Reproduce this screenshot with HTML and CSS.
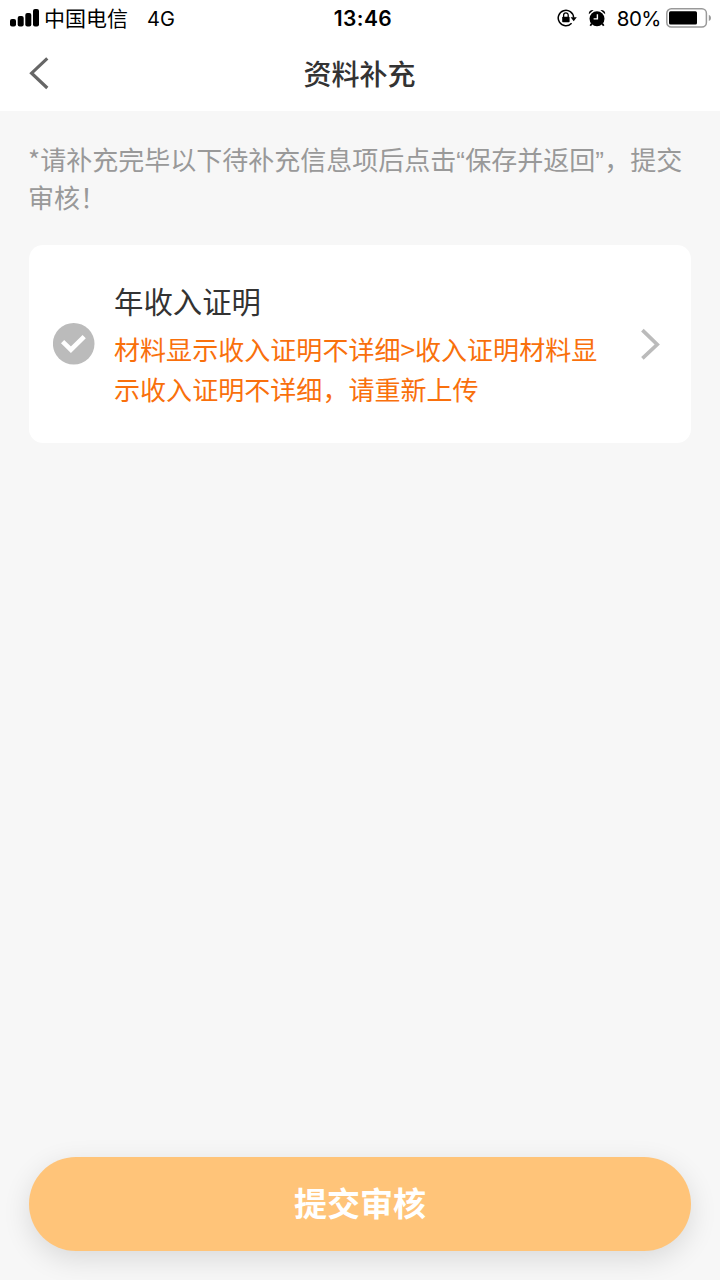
FILE: index.html
```html
<!DOCTYPE html>
<html lang="zh-CN">
<head>
<meta charset="utf-8">
<title>资料补充</title>
<link rel="stylesheet" href="styles.css">
</head>
<body>
<div class="screen">
  <div class="status">
    <div class="status-left">
      <svg class="signal" width="29" height="18" viewBox="0 0 29 18"><rect x="0" y="10" width="6" height="7.5" rx="2"/><rect x="7.7" y="7" width="6" height="10.5" rx="2"/><rect x="15.3" y="4" width="6" height="13.5" rx="2"/><rect x="23" y="0" width="6" height="17.5" rx="2"/></svg>
      <span class="carrier">中国电信</span>
      <span class="network">4G</span>
    </div>
    <span class="time">13:46</span>
    <div class="status-right">
      <svg class="lock" width="20" height="18" viewBox="0 0 20 18"><path d="M14.6 14.2A7.7 7.7 0 1 1 16.6 8.6" fill="none" stroke="#000" stroke-width="1.5"/><path d="M13.6 8.2h6.2l-3.1 4z"/><rect x="5.2" y="7.8" width="7.4" height="5.4" rx=".8"/><path d="M6.6 8V6.2a2.3 2.3 0 0 1 4.6 0V8" fill="none" stroke="#000" stroke-width="1.3"/></svg>
      <svg class="alarm" width="18" height="18" viewBox="0 0 18 18"><circle cx="9" cy="9.7" r="7.5"/><path d="M.8 5.2C.5 2.2 2.6.7 5.6.9L.8 5.2M17.2 5.2c.3-3-1.8-4.5-4.8-4.3l4.8 4.3"/><path d="M3.8 14.5 2.3 16.7M14.2 14.5l1.5 2.2" stroke="#000" stroke-width="1.8"/><path d="M9.4 5.2v4.7H5.6" fill="none" stroke="#fff" stroke-width="1.4"/></svg>
      <span class="percent">80%</span>
      <svg class="battery" width="46" height="20" viewBox="0 0 46 20"><rect x=".8" y=".8" width="39.6" height="18.2" rx="4.5" fill="none" stroke="#999" stroke-width="1.5"/><rect x="3" y="3.2" width="28" height="13.3" rx="1.5"/><path d="M42.8 6.7q2.2 1 2.2 3.2t-2.2 3.2z" fill="#999"/></svg>
    </div>
  </div>
  <header class="nav">
    <svg class="back" width="20" height="34" viewBox="0 0 20 34"><path d="M18.3 1.4 2.6 16.2l15.7 14.8" fill="none" stroke="#666" stroke-width="3.2"/></svg>
    <h1 class="title">资料补充</h1>
  </header>
  <main class="content">
    <p class="notice">*请补充完毕以下待补充信息项后点击<span class="quote">“</span>保存并返回<span class="quote">”</span>，提交<br>审核！</p>
    <section class="card">
      <svg class="check" width="42" height="42" viewBox="0 0 42 42"><circle cx="20.7" cy="20.8" r="20.8" fill="#bbb"/><path d="M9.6 18.6l8.3 8.1L31.2 13.6" fill="none" stroke="#fff" stroke-width="4.6"/></svg>
      <div class="card-body">
        <h2 class="name">年收入证明</h2>
        <p class="reason">材料显示收入证明不详细&gt;收入证明材料显<br>示收入证明不详细，请重新上传</p>
      </div>
      <svg class="chevron" width="20" height="32" viewBox="0 0 20 32"><path d="M2.4 2.2 17.2 16.5 2.4 30.4" fill="none" stroke="#bbb" stroke-width="3.7"/></svg>
    </section>
  </main>
  <footer class="footer"><button class="submit">提交审核</button></footer>
</div>
</body>
</html>
```
FILE: styles.css
```css
* { box-sizing: border-box; }
body {
  margin: 0;
  font-family: "Noto Sans CJK SC", sans-serif;
  background: #f7f7f7;
}
h1, h2, p { margin: 0; font-weight: 400; }
svg { display: block; flex: none; }
.screen {
  width: 720px;
  height: 1280px;
  display: flex;
  flex-direction: column;
  overflow: hidden;
}
.status {
  height: 36px;
  padding: 0 8px 0 10px;
  display: grid;
  grid-template-columns: 1fr auto 1fr;
  align-items: center;
  background: #fff;
  color: #000;
  font-size: 21px;
  line-height: 36px;
}
.status-left, .status-right { display: flex; align-items: center; }
.status-right { justify-content: flex-end; }
.carrier { margin-left: 5px; padding-bottom: 2px; line-height: 34px; }
.network { margin-left: 19px; padding-top: 2px; font-family: Inter, sans-serif; font-size: 20px; line-height: 34px; }
.time { padding: 2px 0 0 4px; font-family: Inter, sans-serif; font-size: 21px; font-weight: 600; letter-spacing: .4px; line-height: 34px; }
.alarm { margin-left: 11px; }
.percent { margin-left: 11px; padding-top: 2px; font-family: Inter, sans-serif; font-size: 20.5px; letter-spacing: -.5px; line-height: 34px; }
.battery { margin-left: 5px; }
.nav {
  height: 75px;
  padding: 0 29px;
  display: grid;
  grid-template-columns: 40px 1fr 40px;
  align-items: center;
  background: #fff;
}
.title {
  padding: 0 1px 2px 0;
  color: #333;
  text-align: center;
  font-size: 28px;
  font-weight: 500;
  line-height: 38px;
}
.content { flex: 1; padding: 29px 29px 0; }
.notice { margin-left: -1px; color: #999; font-size: 26px; line-height: 38px; white-space: nowrap; }
.quote { display: inline-block; width: 9px; font-family: "Liberation Sans", sans-serif; line-height: 1; }
.card {
  height: 198px;
  margin-top: 29px;
  padding: 0 31px 0 24px;
  display: flex;
  align-items: center;
  border-radius: 14px;
  background: #fff;
}
.card-body { flex: 1; margin-left: 19px; white-space: nowrap; }
.name { color: #333; font-size: 29.4px; line-height: 42px; }
.reason { margin-top: 8px; color: #f9700c; font-size: 26.06px; line-height: 40px; }
.footer { padding: 0 29px 29px; }
.submit {
  display: block;
  width: 100%;
  height: 94px;
  padding: 0 0 4px;
  border: 0;
  border-radius: 47px;
  background: #ffc479;
  box-shadow: 0 8px 28px rgba(0, 0, 0, .12);
  color: #fff;
  font: 700 33px/90px "Noto Sans CJK SC", sans-serif;
}
```
